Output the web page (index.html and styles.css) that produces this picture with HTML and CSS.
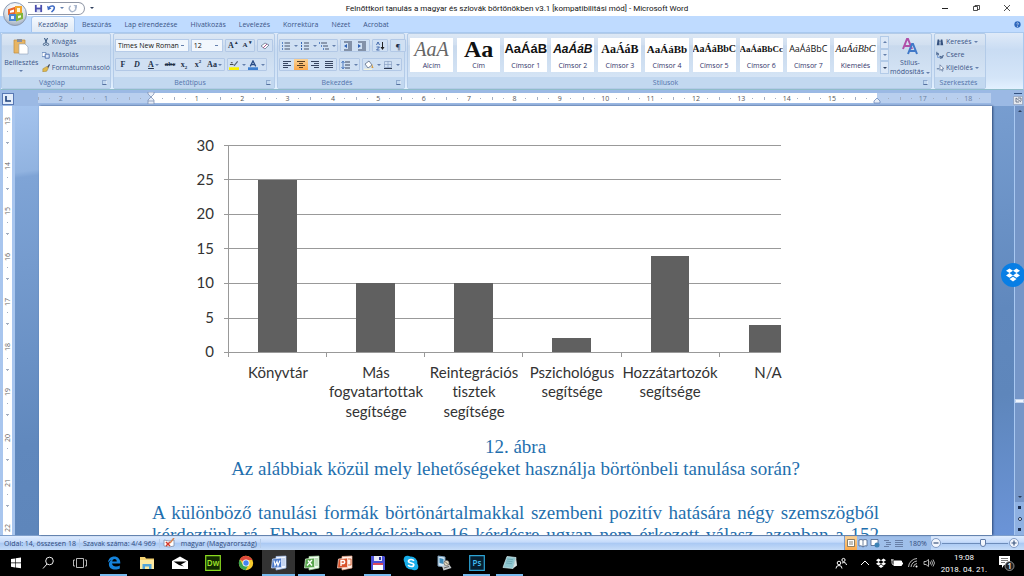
FILE: index.html
```html
<!DOCTYPE html>
<html lang="hu">
<head>
  <meta charset="UTF-8" />
  <title>Felnőttkori tanulás - Microsoft Word</title>
  <link rel="stylesheet" href="styles.css">
</head>
<body>
  <!-- Title bar -->
  <header class="titlebar">
    <button class="office-btn" aria-label="Office gomb">
      <svg viewBox="0 0 24 24">
        <defs><radialGradient id="orb" cx=".5" cy=".25" r=".8"><stop offset="0" stop-color="#fff"/><stop offset=".55" stop-color="#dde3ea"/><stop offset="1" stop-color="#98a5b8"/></radialGradient></defs>
        <circle cx="12" cy="12" r="11.5" fill="url(#orb)" stroke="#8c9cb5"/>
        <path d="M6 8l6-2v5l-6 1z" fill="#fff" stroke="#e8642c" stroke-width="2"/>
        <path d="M13 5h5v6h-5z" fill="#fff3d0" stroke="#f2a52d" stroke-width="2"/>
        <path d="M7 13h5v5H7z" fill="#e7f0ff" stroke="#4a86cf" stroke-width="2"/>
        <path d="M14 13l5-1v4l-5 2z" fill="#f3ffe0" stroke="#7eb43c" stroke-width="2"/>
      </svg>
    </button>
    <div class="qat">
      <button aria-label="Mentés"><svg viewBox="0 0 10 10"><path d="M1 1h8v8H1z" fill="#4b4fae"/><path d="M3 1h4v3H3z" fill="#fff"/><path d="M3 6h4v3H3z" fill="#d5dcf4"/></svg></button>
      <button aria-label="Visszavonás"><svg viewBox="0 0 10 10"><path d="M2 4c3-3 7-2 6 1-.4 2-2 3-3 4" fill="none" stroke="#3f6bc4" stroke-width="1.7"/><path d="M0 2l1 5 4-2z" fill="#3f6bc4"/></svg></button>
      <i class="arrow"></i>
      <button aria-label="Ismét"><svg viewBox="0 0 10 10"><path d="M3 2a3.5 3.5 0 1 0 5 1" fill="none" stroke="#aab7cd" stroke-width="1.6"/><path d="M6 1h4v4z" fill="#aab7cd"/></svg></button>
    </div>
    <i class="arrow dark"></i>
    <h1>Felnőttkori tanulás a magyar és szlovák börtönökben v3.1 [kompatibilitási mód] - Microsoft Word</h1>
    <div class="window-btns">
      <button aria-label="Kis méret"><svg viewBox="0 0 10 10"><path d="M2 5.500h6" stroke="#222"/></svg></button>
      <button aria-label="Előző méret"><svg viewBox="0 0 10 10"><path d="M2.500 3.500h4v4h-4zM4 3.500v-1h4.500v4h-2" fill="none" stroke="#222" stroke-width=".8"/></svg></button>
      <button aria-label="Bezárás"><svg viewBox="0 0 10 10"><path d="M2 2l6 6M8 2l-6 6" stroke="#222" stroke-width=".8"/></svg></button>
    </div>
  </header>

  <!-- Ribbon tabs -->
  <nav class="tabs">
    <button class="active">Kezdőlap</button>
    <button>Beszúrás</button>
    <button>Lap elrendezése</button>
    <button>Hivatkozás</button>
    <button>Levelezés</button>
    <button>Korrektúra</button>
    <button>Nézet</button>
    <button>Acrobat</button>
    <button class="help" aria-label="Súgó"><svg viewBox="0 0 10 10"><circle cx="5" cy="5" r="3.500" fill="#2f68bd"/><path d="M4 4q1-1.500 2 0 0 1-1 1.500M5 6.500v1" fill="none" stroke="#fff" stroke-width=".8"/></svg></button>
  </nav>

  <!-- Ribbon -->
  <section class="ribbon">
    <div class="group clipboard">
      <div class="group-body">
        <button class="big"><svg viewBox="0 0 16 17"><path d="M1 2h11v13H1z" fill="#e8b563" stroke="#c18c3c" stroke-width=".7"/><path d="M4 1h5v3H4z" fill="#8a8f9c"/><path d="M6 6h6l3 3v7H6z" fill="#fff" stroke="#8d9db7" stroke-width=".6"/></svg>Beillesztés<i class="arrow"></i></button>
        <div class="stack">
          <button><svg viewBox="0 0 10 10"><path d="M3 0l3 6M7 0L4 6" stroke="#38577f" stroke-width="1.300"/><circle cx="3" cy="8" r="1.400" fill="none" stroke="#38577f"/><circle cx="7" cy="8" r="1.400" fill="none" stroke="#38577f"/></svg>Kivágás</button>
          <button><svg viewBox="0 0 10 10"><path d="M0 2h5v5H0z" fill="#fff" stroke="#5c7fb5"/><path d="M4 4h5v5H4z" fill="#dbe7fa" stroke="#3d62a5"/></svg>Másolás</button>
          <button><svg viewBox="0 0 10 10"><path d="M6 4l3-4 1 1-2 4z" fill="#4b4f58"/><path d="M1 6l5-3 2 2-2 4-5 1z" fill="#e0b84c" stroke="#8b7436" stroke-width=".5"/></svg>Formátummásoló</button>
        </div>
      </div>
      <footer>Vágólap<i class="launcher"></i></footer>
    </div>

    <div class="group font">
      <div class="group-body rows">
        <div class="row">
          <select class="font-name" aria-label="Betűtípus"><option>Times New Roman</option></select>
          <select class="font-size" aria-label="Betűméret"><option>12</option></select>
          <span class="strip"><button class="serif">A<sup>▴</sup></button><button class="serif small">A<sup>▾</sup></button></span>
          <span class="strip"><button aria-label="Formázás törlése"><svg viewBox="0 0 10 10"><path d="M1 5l4-3 4 2-4 4z" fill="#fff" stroke="#677791" stroke-width=".8"/><path d="M3 7l4-4" stroke="#a75b8d"/></svg></button></span>
        </div>
        <div class="row">
          <span class="strip">
            <button class="serif">F</button>
            <button class="serif italic">D</button>
            <button class="serif wide"><u>A</u><i class="arrow"></i></button>
            <button class="serif"><s>abc</s></button>
            <button class="serif script">x<sub>2</sub></button>
            <button class="serif script">x<sup>2</sup></button>
            <button class="serif wide">Aa<i class="arrow"></i></button>
          </span>
          <span class="strip">
            <button class="wide" aria-label="Kiemelés színe"><svg viewBox="0 0 11 11"><path d="M1 5h4M2 3h2" stroke="#333"/><path d="M5 6l4-5 1 1-4 5z" fill="#566377"/><path d="M0 8h11v3H0z" fill="#fbf100"/></svg><i class="arrow"></i></button>
            <button class="wide" aria-label="Betűszín"><svg viewBox="0 0 11 11"><path d="M2.500 7l3-6 3 6M4 5h3" fill="none" stroke="#284b85" stroke-width="1.400"/><path d="M0 8h11v3H0z" fill="#3d7fd0"/></svg><i class="arrow"></i></button>
          </span>
        </div>
      </div>
      <footer>Betűtípus<i class="launcher"></i></footer>
    </div>

    <div class="group paragraph">
      <div class="group-body rows">
        <div class="row">
          <span class="strip">
            <button class="wide" aria-label="Felsorolás"><svg viewBox="0 0 10 10"><path d="M3.500 2H9M3.500 5H9M3.500 8H9" stroke="#47536b"/><path d="M1 2h1M1 5h1M1 8h1" stroke="#3565b5" stroke-width="1.500"/></svg><i class="arrow"></i></button>
            <button class="wide" aria-label="Számozás"><svg viewBox="0 0 10 10"><path d="M4 2h5M4 5h5M4 8h5" stroke="#47536b"/><path d="M1.500 1v8" stroke="#3565b5" stroke-dasharray="2 1"/></svg><i class="arrow"></i></button>
            <button class="wide" aria-label="Többszintű lista"><svg viewBox="0 0 10 10"><path d="M2 2h6M4 5h5M6 8h4" stroke="#47536b"/><path d="M0 2h1M2 5h1M4 8h1" stroke="#3565b5" stroke-width="1.500"/></svg><i class="arrow"></i></button>
          </span>
          <span class="strip">
            <button aria-label="Behúzás csökkentése"><svg viewBox="0 0 10 10"><path d="M1 1h8M5 3h4M5 5h4M5 7h4M1 9h8" stroke="#38455f"/><path d="M4 3v4L1 5z" fill="#2f62b5"/></svg></button>
            <button aria-label="Behúzás növelése"><svg viewBox="0 0 10 10"><path d="M1 1h8M5 3h4M5 5h4M5 7h4M1 9h8" stroke="#38455f"/><path d="M1 3v4l3-2z" fill="#2f62b5"/></svg></button>
          </span>
          <span class="strip"><button aria-label="Rendezés"><svg viewBox="0 0 10 10"><path d="M1.500 4L3 1l1.500 3M1.500 6h3l-3 3h3" fill="none" stroke="#3159a0" stroke-width=".9"/><path d="M7.500 1v6" stroke="#222"/><path d="M5.500 6h4l-2 3z" fill="#222"/></svg></button></span>
          <span class="strip"><button class="pilcrow">¶</button></span>
        </div>
        <div class="row">
          <span class="strip">
            <button aria-label="Balra"><svg viewBox="0 0 10 10"><path d="M1 1.500h8M1 3.500h5M1 5.500h8M1 7.500h5" stroke="#38455f"/></svg></button>
            <button class="pressed" aria-label="Középre"><svg viewBox="0 0 10 10"><path d="M1 1.500h8M3 3.500h4M1 5.500h8M3 7.500h4" stroke="#593f22"/></svg></button>
            <button aria-label="Jobbra"><svg viewBox="0 0 10 10"><path d="M1 1.500h8M4 3.500h5M1 5.500h8M4 7.500h5" stroke="#38455f"/></svg></button>
            <button aria-label="Sorkizárt"><svg viewBox="0 0 10 10"><path d="M1 1.500h8M1 3.500h8M1 5.500h8M1 7.500h8" stroke="#38455f"/></svg></button>
          </span>
          <span class="strip"><button class="wide" aria-label="Sorköz"><svg viewBox="0 0 10 10"><path d="M4 2h5M4 5h5M4 8h5" stroke="#38455f"/><path d="M2 2v6M.5 3L2 1l1.500 2M.5 7L2 9l1.500-2" fill="none" stroke="#2f62b5" stroke-width=".8"/></svg><i class="arrow"></i></button></span>
          <span class="strip">
            <button class="wide" aria-label="Árnyékolás"><svg viewBox="0 0 10 10"><path d="M1 4l4-3 3 4-4 3z" fill="#fff" stroke="#5b6c86" stroke-width=".8"/><path d="M8 4l1.500 4h-2z" fill="#d69a3a"/><path d="M0 8.500h8v1.500H0z" fill="#f2f2dc"/></svg><i class="arrow"></i></button>
            <button class="wide" aria-label="Szegélyek"><svg viewBox="0 0 10 10"><path d="M1.500 1.500h7v6h-7zM5 1v7M1 4.500h8" fill="none" stroke="#8aa0c4" stroke-width=".7"/><path d="M1 8.500h8" stroke="#2f3a50"/></svg><i class="arrow"></i></button>
          </span>
        </div>
      </div>
      <footer>Bekezdés<i class="launcher"></i></footer>
    </div>

    <div class="group styles">
      <div class="group-body">
        <div class="gallery">
          <button><span class="sample subtitle">AaA</span>Alcím</button>
          <button><span class="sample title">Aa</span>Cím</button>
          <button><span class="sample h1">AaÁáB</span>Címsor 1</button>
          <button><span class="sample h2">AaÁáB</span>Címsor 2</button>
          <button><span class="sample h3">AaÁáB</span>Címsor 3</button>
          <button><span class="sample h4">AaÁáBb</span>Címsor 4</button>
          <button><span class="sample h5">AaÁáBbC</span>Címsor 5</button>
          <button><span class="sample h6">AaÁáBbCc</span>Címsor 6</button>
          <button><span class="sample h7">AaÁáBbC</span>Címsor 7</button>
          <button><span class="sample emph">AaÁáBbC</span>Kiemelés</button>
        </div>
        <div class="gallery-scroll">
          <button aria-label="Fel"><i class="arrow up"></i></button>
          <button aria-label="Le"><i class="arrow"></i></button>
          <button aria-label="Több"><i class="arrow dark"></i></button>
        </div>
        <button class="big change-styles"><svg viewBox="0 0 16 17"><path d="M1 11L5 1h1l4 10M3 8h5" fill="none" stroke="#b04fa8" stroke-width="2"/><path d="M6 16l4-10h1l4 10M8 13h5" fill="none" stroke="#3f78c8" stroke-width="2"/></svg><span>Stílus-<br>módosítás <i class="arrow"></i></span></button>
      </div>
      <footer>Stílusok<i class="launcher"></i></footer>
    </div>

    <div class="group editing">
      <div class="group-body">
        <div class="stack">
          <button><svg viewBox="0 0 10 10"><path d="M1 9l1-7h2l.5 7zM9 9L8 2H6l-.5 7z" fill="#34517f"/><path d="M4 4h2" stroke="#34517f"/></svg>Keresés <i class="arrow"></i></button>
          <button><svg viewBox="0 0 10 10"><path d="M1 1v4h2V3H1M5 6v3h2V7H5M8 9V6h2" fill="none" stroke="#34517f"/><path d="M2 6v2h2" fill="none" stroke="#3f78c8" stroke-width=".8"/></svg>Csere</button>
          <button><svg viewBox="0 0 10 10"><path d="M5 1v7l1.500-1.500 1.200 2.500 1-.5-1-2.500H10z" fill="#fff" stroke="#34517f" stroke-width=".7"/><path d="M1 6h3" stroke="#34517f"/></svg>Kijelölés <i class="arrow"></i></button>
        </div>
      </div>
      <footer>Szerkesztés</footer>
    </div>
  </section>

  <!-- Horizontal ruler -->
  <div class="ruler-row">
    <button class="tab-stop" aria-label="Tabulátor"><svg viewBox="0 0 10 10"><path d="M3 2v5h5" fill="none" stroke="#1d3f7a" stroke-width="1.600"/></svg></button>
    <div class="ruler">
      <span>2</span><span>1</span>
      <span class="edge-left"><svg viewBox="0 0 8 12"><path d="M1 0h6v2L4 5 1 2zM4 5l3 3v4H1V8zM1 9h6" fill="#e8eef8" stroke="#7388ad" stroke-width=".7"/></svg></span>
      <span class="on">1</span><span class="on">2</span><span class="on">3</span><span class="on">4</span><span class="on">5</span>
      <span class="on">6</span><span class="on">7</span><span class="on">8</span><span class="on">9</span><span class="on">10</span>
      <span class="on">11</span><span class="on">12</span><span class="on">13</span><span class="on">14</span><span class="on">15</span>
      <span class="edge-right"><svg viewBox="0 0 8 12"><path d="M4 6l3 3v2H1V9z" fill="#e8eef8" stroke="#5f7fb5" stroke-width=".7"/></svg></span>
      <span>17</span><span>18</span>
    </div>
    <button class="ruler-toggle" aria-label="Vonalzó"><svg viewBox="0 0 10 12"><path d="M1 .5h8" stroke="#34517f"/><path d="M.5 3.500h9v8h-9z" fill="#e6e9ee" stroke="#8b99b2" stroke-width=".6"/><path d="M3 5l5 4M3 5v4h3M5 5h3v3" fill="none" stroke="#59637a" stroke-width=".8"/></svg></button>
  </div>

  <!-- Document -->
  <main class="workspace">
    <div class="vruler">
      <div class="vruler-scale">
        <span>13</span><span>14</span><span>15</span><span>16</span><span>17</span>
        <span>18</span><span>19</span><span>20</span><span>21</span><span>22</span>
      </div>
    </div>
    <article class="page">
      <svg class="chart" viewBox="193 137 646 288" role="img" aria-label="12. ábra">
        <g class="grid">
          <path d="M224 145.500H781M224 179.500H781M224 214.500H781M224 248.500H781M224 283.500H781M224 318.500H781"/>
          <path d="M224 352.500H781M228.500 145V357M326.500 352V357M424.500 352V357M522.500 352V357M621.500 352V357M719.500 352V357"/>
        </g>
        <g class="bars">
          <rect x="258" y="180" width="39" height="172"/>
          <rect x="356" y="283" width="39" height="69"/>
          <rect x="454" y="283" width="39" height="69"/>
          <rect x="552" y="338" width="39" height="14"/>
          <rect x="651" y="256" width="38" height="96"/>
          <rect x="749" y="325" width="32" height="27"/>
        </g>
        <g class="axis-y">
          <text x="214" y="151">30</text>
          <text x="214" y="185">25</text>
          <text x="214" y="219">20</text>
          <text x="214" y="254">15</text>
          <text x="214" y="288">10</text>
          <text x="214" y="323">5</text>
          <text x="214" y="357">0</text>
        </g>
        <g class="axis-x">
          <text x="278" y="378">Könyvtár</text>
          <text x="376" y="378">Más</text>
          <text x="376" y="397">fogvatartottak</text>
          <text x="376" y="417">segítsége</text>
          <text x="474" y="378">Reintegrációs</text>
          <text x="474" y="397">tisztek</text>
          <text x="474" y="417">segítsége</text>
          <text x="572" y="378">Pszichológus</text>
          <text x="572" y="397">segítsége</text>
          <text x="670" y="378">Hozzátartozók</text>
          <text x="670" y="397">segítsége</text>
          <text x="768" y="378">N/A</text>
        </g>
      </svg>
      <p class="caption">12. ábra</p>
      <p class="caption question">Az alábbiak közül mely lehetőségeket használja börtönbeli tanulása során?</p>
      <p class="line">A különböző tanulási formák börtönártalmakkal szembeni pozitív hatására négy szemszögből</p>
      <p class="line">kérdeztünk rá. Ebben a kérdéskörben 16 kérdésre ugyan nem érkezett válasz, azonban a 152</p>
    </article>
    <div class="scrollbar">
      <div class="track">
        <i class="arrow up dark"></i>
        <div class="thumb"></div>
        <i class="arrow dark"></i>
      </div>
      <button aria-label="Előző oldal"><i class="dot"></i></button>
      <button aria-label="Tallózás"><i class="dot ring"></i></button>
      <button aria-label="Következő oldal"><i class="dot"></i></button>
    </div>
    <button class="dropbox" aria-label="Dropbox"><svg viewBox="0 0 24 24"><circle cx="12" cy="12" r="12" fill="#087ee5"/><path d="M8.500 5.500l3.500 2.300-3.500 2.300L5 7.800zM15.500 5.500L19 7.800l-3.500 2.300L12 7.800zM8.500 10.100l3.500 2.300-3.500 2.300L5 12.400zM15.500 10.100l3.500 2.300-3.500 2.300-3.500-2.300zM12 13.800l3.500 2.300-3.500 2.300-3.500-2.300z" fill="#fff"/></svg></button>
  </main>

  <!-- Status bar -->
  <footer class="statusbar">
    <span>Oldal: 14, összesen 18</span>
    <span>Szavak száma: 4/4 969</span>
    <span class="proof"><svg viewBox="0 0 12 10"><path d="M1 2l5 1 5-1v6l-5 1-5-1z" fill="#fff" stroke="#7b8da9" stroke-width=".8"/><path d="M3 4l4 4M7 4L3 8" stroke="#d33a2c" stroke-width="1.500"/><path d="M7 5l4-5" stroke="#d98555" stroke-width="1.500"/></svg></span>
    <span>magyar (Magyarország)</span>
    <div class="views">
      <button class="pressed" aria-label="Nyomtatási elrendezés"><svg viewBox="0 0 10 10"><path d="M1.500 1.500h7v7h-7zM3 4h4M3 6h4" fill="#fff" stroke="#6d6650" stroke-width=".8"/></svg></button>
      <button aria-label="Olvasás"><svg viewBox="0 0 10 10"><path d="M5 2Q3 1 1 2v6q2-1 4 1 2-2 4-1V2Q7 1 5 2v7" fill="#fff" stroke="#4a5f86" stroke-width=".8"/></svg></button>
      <button aria-label="Webes elrendezés"><svg viewBox="0 0 10 10"><path d="M1 1.500h7v6H1z" fill="#fff" stroke="#4a5f86" stroke-width=".8"/><circle cx="7" cy="7" r="2.500" fill="#3d82b5"/></svg></button>
      <button aria-label="Vázlat"><svg viewBox="0 0 10 10"><path d="M2 2.500h5M4 4.500h5M4 6.500h5M2 8.500h5" stroke="#5a6f95" stroke-width=".8"/></svg></button>
      <button aria-label="Piszkozat"><svg viewBox="0 0 10 10"><path d="M1 2.500h8M1 4.500h8M1 6.500h8M1 8.500h8" stroke="#5a6f95" stroke-width=".8"/></svg></button>
    </div>
    <button class="zoom-value">180%</button>
    <button class="round" aria-label="Kicsinyítés"><svg viewBox="0 0 10 10"><circle cx="5" cy="5" r="4.500" fill="#f2f6fd" stroke="#6c89b8" stroke-width=".8"/><path d="M2.500 5h5" stroke="#3a557f" stroke-width="1.200"/></svg></button>
    <input class="zoom" type="range" min="10" max="220" value="142" aria-label="Nagyítás">
    <button class="round" aria-label="Nagyítás"><svg viewBox="0 0 10 10"><circle cx="5" cy="5" r="4.500" fill="#f2f6fd" stroke="#6c89b8" stroke-width=".8"/><path d="M2.500 5h5M5 2.500v5" stroke="#3a557f" stroke-width="1.200"/></svg></button>
  </footer>

  <!-- Windows taskbar -->
  <nav class="taskbar">
    <div class="system">
      <button aria-label="Start"><svg viewBox="0 0 16 16"><path d="M3 4l4-.6v4.200H3zM7.600 3.300L13 2.500v5.100H7.600zM3 8.200h4v4.200l-4-.6zM7.600 8.200H13v5.100l-5.400-.8z" fill="#fff"/></svg></button>
      <button aria-label="Keresés"><svg viewBox="0 0 16 16"><circle cx="9.500" cy="6" r="3.800" fill="none" stroke="#eee"/><path d="M7 9l-4 4.500" stroke="#eee"/></svg></button>
      <button aria-label="Feladatnézet"><svg viewBox="0 0 16 16"><path d="M4.500 3.500h7v9h-7zM3 5H1.500v6H3M13 5h1.500v6H13" fill="none" stroke="#ccc" stroke-width=".9"/></svg></button>
    </div>
    <div class="apps">
      <button class="open" aria-label="Edge"><svg viewBox="0 0 16 16"><path d="M2 7.500C2.500 3.500 5 1.500 8.200 1.500c3.800 0 6.300 2.700 6.100 7H6c.2 2 2 3 4 3 1.500 0 2.800-.4 3.800-1v3c-1.200.8-2.800 1.100-4.500 1.100-3.800 0-6.400-2-6.400-5.300 0-2 1-3.500 2.800-4.300-1.700.3-2.900 1.300-3.700 2.500zM6.200 6.500h4.600c0-1.500-.8-2.400-2.200-2.400-1.300 0-2.200.9-2.400 2.400z" fill="#1583dc"/></svg></button>
      <button aria-label="Fájlkezelő"><svg viewBox="0 0 16 16"><path d="M1 2h5l1 1.500h8V14H1z" fill="#f4d271"/><path d="M1 5h14v9H1z" fill="#fde9a0"/><path d="M3.500 14V9h9v5h-2.500v-2.500H6V14z" fill="#55a5d9"/></svg></button>
      <button aria-label="Posta"><svg viewBox="0 0 16 16"><path d="M0 6l8-4.500L16 6v8H0z" fill="#fff"/><path d="M1.500 6.500h13L9 9.500l3 2-5-1.500z" fill="#000"/></svg></button>
      <button aria-label="Dreamweaver"><svg viewBox="0 0 16 16"><path d="M.7.700h14.600v14.600H.7z" fill="#122b00" stroke="#8adb20" stroke-width="1.200"/><text class="dw" x="8" y="11">Dw</text></svg></button>
      <button aria-label="Chrome"><svg viewBox="0 0 16 16"><circle cx="8" cy="8" r="7.200" fill="#f7ca2d"/><path d="M8 8L1.800 4.400A7.200 7.200 0 0 1 14.500 5H8z" fill="#de4a3c"/><path d="M1.800 4.400A7.200 7.200 0 0 0 7.500 15.200L10.500 10 8 8 5 10z" fill="#3ca552"/><circle cx="8" cy="8" r="3.500" fill="#fff"/><circle cx="8" cy="8" r="2.700" fill="#4284f0"/></svg></button>
      <button class="open current" aria-label="Word"><svg viewBox="0 0 16 16"><path d="M5 1.500L15 1v12l-10 2z" fill="#f3f7ff" stroke="#9db9e8" stroke-width=".7"/><path d="M11 4h3M11 6h3M11 8h3M11 10h3" stroke="#7193cf" stroke-width=".7"/><path d="M1.500 4l9-1v9.500l-10 .5z" fill="#4a78c8" stroke="#dbe7ff" stroke-width=".7"/><path d="M3 5.500l1 5 2-4 1 4 2-5" fill="none" stroke="#fff" stroke-width="1.200"/></svg></button>
      <button class="open" aria-label="Excel"><svg viewBox="0 0 16 16"><path d="M5 1.500L15 1v12l-10 2z" fill="#f3fff2" stroke="#9ed09a" stroke-width=".7"/><path d="M11 4h3M11 6h3M11 8h3M11 10h3" stroke="#5aa657" stroke-width=".7"/><path d="M1.500 4l9-1v9.500l-10 .5z" fill="#58a64d" stroke="#e2f8de" stroke-width=".7"/><path d="M4 5.500l4 5M8 5l-5 5.500" stroke="#fff" stroke-width="1.300"/></svg></button>
      <button aria-label="PowerPoint"><svg viewBox="0 0 16 16"><path d="M5 1.500L15 1v12l-10 2z" fill="#fff3ed" stroke="#e9a88b" stroke-width=".7"/><path d="M11 4h3v6h-3" fill="none" stroke="#db6a3f"/><path d="M1.500 4l9-1v9.500l-10 .5z" fill="#d9532c" stroke="#ffe4d8" stroke-width=".7"/><path d="M4 11V5.500h3q1.500 1.500 0 3H4" fill="none" stroke="#fff" stroke-width="1.300"/></svg></button>
      <button class="open" aria-label="Total Commander"><svg viewBox="0 0 16 16"><path d="M1 1h13l1 1v13H1z" fill="#4a50d8"/><path d="M4 1h8v5H4z" fill="#e8e8f2"/><path d="M9 2h2v3H9z" fill="#3038a0"/><path d="M3 8h10v7H3z" fill="#fff"/><path d="M3 8h10v2H3z" fill="#d84a5b"/></svg></button>
      <button aria-label="Skype"><svg viewBox="0 0 16 16"><circle cx="8" cy="8" r="6.400" fill="#18aeea"/><circle cx="4.500" cy="4.500" r="3.800" fill="#18aeea"/><circle cx="11.500" cy="11.500" r="3.800" fill="#18aeea"/><path d="M10.800 5.800C10 4 5.500 4 5.500 6.300c0 2.200 5.300 1.100 5.300 3.500 0 2.300-4.800 2.200-5.600.2" fill="none" stroke="#fff" stroke-width="1.700"/></svg></button>
      <button aria-label="Eszközök"><svg viewBox="0 0 16 16"><path d="M2 1l7 1v10l-7-1z" fill="#d4e8f5" stroke="#7999b5"/><path d="M3.500 3l4 1v5l-4-1z" fill="#3789bb"/><path d="M6 11l7-2 2.500 4-8 2.500z" fill="#c5c9cb"/><circle cx="10.500" cy="8" r="2.600" fill="#e5dac0" stroke="#666" stroke-width=".7"/><path d="M9 6.500l3 3M8 13l5-1.500" stroke="#444" stroke-width=".8"/></svg></button>
      <button class="open" aria-label="Photoshop"><svg viewBox="0 0 16 16"><path d="M.7.700h14.600v14.600H.7z" fill="#061e30" stroke="#2da4d4" stroke-width="1.200"/><text class="ps" x="8" y="11">Ps</text></svg></button>
      <button class="open" aria-label="Jegyzettömb"><svg viewBox="0 0 16 16"><path d="M5 1.500l9 1-3 11-10-1z" fill="#8fc6cf" stroke="#d9eef0" stroke-width=".7"/><path d="M11 13.500l3-11 1 8z" fill="#d8e4e5"/><path d="M5 4l6 .7M4.500 6l6 .7M4 8l6 .7" stroke="#5d98a6" stroke-width=".6"/></svg></button>
    </div>
    <div class="tray">
      <button class="people" aria-label="Kapcsolatok"><svg viewBox="0 0 12 12"><circle cx="4" cy="6" r="1.800" fill="none" stroke="#fff"/><path d="M1 11.500q0-3 3-3t3 3" fill="none" stroke="#fff"/><circle cx="8.500" cy="3" r="1.600" fill="none" stroke="#fff"/><path d="M7 6q4-1.500 4.500 2" fill="none" stroke="#fff"/></svg></button>
      <button aria-label="Rejtett ikonok"><svg viewBox="0 0 12 12"><path d="M2 8l4-4 4 4" fill="none" stroke="#fff"/></svg></button>
      <button aria-label="Dropbox állapot"><svg viewBox="0 0 24 24"><path d="M7 3l5 3.500L7 10 2 6.500zM17 3l5 3.500-5 3.500-5-3.500zM7 10l5 3.500L7 17l-5-3.500zM17 10l5 3.500-5 3.500-5-3.500zM12 15l5 3.500-5 3.500-5-3.500z" fill="#fff"/></svg></button>
      <button aria-label="Akkumulátor"><svg viewBox="0 0 12 12"><path d="M3 4h7.500v4.500H3z" fill="#fff" stroke="#fff"/><path d="M11 5.500h1v2h-1z" fill="#fff"/><path d="M0 3h3M1 2v4q0 2 2 2" fill="none" stroke="#ccc"/></svg></button>
      <button aria-label="Hálózat"><svg viewBox="0 0 12 12"><path d="M1.500 10A9 9 0 0 1 10 1.500M4 10a6.500 6.500 0 0 1 6-6M6.500 10A4 4 0 0 1 10 6.500" fill="none" stroke="#ccc" stroke-width=".9"/><circle cx="9.500" cy="9.500" r="1" fill="#fff"/></svg></button>
      <button aria-label="Hangerő"><svg viewBox="0 0 12 12"><path d="M1 4.500h2l2.500-2v7L3 7.500H1zM7 4.500q1 1.500 0 3M8.500 3.500q2 2.500 0 5M10 2.500q3 3.500 0 7" fill="none" stroke="#ddd" stroke-width=".8"/></svg></button>
      <div class="clock"><time>19:08</time><time>2018. 04. 21.</time></div>
      <button class="notes" aria-label="Értesítések"><svg viewBox="0 0 18 18"><path d="M2 2h11v9H7l-2 3v-3H2z" fill="#fff"/><path d="M4 4.500h7M4 6.500h7M4 8.500h4" stroke="#555" stroke-width=".8"/><circle cx="12.500" cy="12" r="4.500" fill="#222" stroke="#aaa" stroke-width=".8"/><text class="count" x="12.500" y="15">1</text></svg></button>
    </div>
  </nav>
</body>
</html>
```

FILE: styles.css
```css
* {
  box-sizing: border-box;
}

body {
  margin: 0;
  height: 100vh;
  display: flex;
  flex-direction: column;
  overflow: hidden;
  font-family: "Open Sans", "Noto Sans", sans-serif;
  font-size: 7px;
  line-height: 9px;
  color: #3b5587;
  background: #a9c4ea;
}

button {
  display: flex;
  align-items: center;
  justify-content: center;
  padding: 0;
  border: none;
  background: none;
  font: inherit;
  color: inherit;
  white-space: nowrap;
}

svg {
  display: block;
  flex: none;
}

.arrow {
  display: inline-block;
  flex: none;
  width: 0;
  border: 2px solid transparent;
  border-top-color: #6580ad;
  border-bottom: 0;
}

.arrow.up {
  border-top: 0;
  border-bottom: 2px solid #6580ad;
}

.arrow.dark {
  border-top-color: #2f3f5c;
}

.arrow.up.dark {
  border-bottom-color: #2f3f5c;
}

/* Title bar */
.titlebar {
  position: relative;
  flex: none;
  display: flex;
  align-items: center;
  height: 16px;
  padding-left: 28px;
  background: #fff;
}

.office-btn {
  position: absolute;
  left: 3px;
  top: 2px;
  z-index: 2;
}

.office-btn svg {
  width: 24px;
  height: 24px;
}

.qat {
  display: flex;
  align-items: center;
  gap: 4px;
  height: 13px;
  padding: 0 7px 0 6px;
  margin-right: 5px;
  border: 1px solid #8f96a5;
  border-left: none;
  border-radius: 0 7px 7px 0;
}

.qat svg {
  width: 9px;
  height: 9px;
}

.titlebar h1 {
  flex: 1;
  margin: 0;
  text-align: center;
  font-family: Roboto, "Open Sans", sans-serif;
  font-size: 8px;
  font-weight: 400;
  color: #111;
}

.window-btns {
  display: flex;
  gap: 21px;
  padding-right: 12px;
}

.window-btns svg {
  width: 10px;
  height: 10px;
}

/* Tabs */
.tabs {
  flex: none;
  display: flex;
  gap: 1px;
  height: 16px;
  padding-left: 31px;
  background: #bfdbff;
}

.tabs button {
  padding: 0 6px;
}

.tabs .active {
  border: 1px solid #a5c5ee;
  border-bottom: none;
  border-radius: 3px 3px 0 0;
  background: linear-gradient(#f4f9ff, #dfe9f5);
}

.tabs .help {
  margin-left: auto;
  padding: 0 2px 0 0;
}

.help svg {
  width: 9px;
  height: 9px;
}

/* Ribbon */
.ribbon {
  flex: none;
  display: flex;
  gap: 2px;
  height: 58px;
  padding: 0 37px 0 0;
  border: 1px solid #a9c9ef;
  border-bottom-color: #8fbcc9;
  background: linear-gradient(#dfeaf8, #c9dcf3 30%, #d4e5f8 80%, #e3f1ff);
}

.group {
  flex: none;
  display: flex;
  flex-direction: column;
  border: 1px solid #b3cbe8;
  border-radius: 2px;
  background: linear-gradient(#dde8f5, #d1dff0 20%, #c8d9ed 22%, #d9e8f8);
}

.group-body {
  flex: 1;
  display: flex;
}

.group > footer {
  display: flex;
  align-items: center;
  height: 11px;
  padding-right: 3px;
  color: #5273ab;
  background: #c2d8f0;
}

.group > footer::before,
.group > footer::after {
  content: "";
  flex: 1;
}

.group > footer::after {
  order: 1;
}

.launcher {
  order: 2;
  width: 5px;
  height: 5px;
  border: 1px solid #8ea9cf;
  border-right-color: #d9e6f5;
  border-bottom-color: #55719f;
}

.clipboard { width: 110px; }
.font { width: 162px; }
.paragraph { width: 128px; }
.styles { flex: 1; }
.editing { width: 52px; }

.big {
  flex-direction: column;
  justify-content: flex-start;
  gap: 3px;
  width: 39px;
  padding-top: 4px;
}

.big svg {
  width: 16px;
  height: 17px;
}

.stack {
  display: flex;
  flex-direction: column;
  align-items: flex-start;
  gap: 4px;
  padding: 3px 0 0 1px;
}

.stack button {
  gap: 2px;
}

.stack svg {
  width: 8px;
  height: 8px;
}

.rows {
  flex-direction: column;
  gap: 6px;
  padding: 5px 1px 0;
}

.row {
  display: flex;
  gap: 2px;
  height: 13px;
}

.strip {
  display: flex;
  border: 1px solid #b2c8e6;
  border-radius: 1px;
  background: #d0e0f3;
}

.strip button {
  width: 14px;
  gap: 3px;
  font-size: 7px;
  color: #223048;
}

.strip .wide {
  width: 19px;
}

.strip svg {
  width: 10px;
  height: 10px;
}

.strip .serif {
  gap: 1px;
  font-family: "Liberation Serif", serif;
  font-size: 8px;
  font-weight: 700;
}

.strip .small {
  font-size: 7px;
}

.strip s {
  font-size: 7px;
}

.strip .italic {
  font-style: italic;
}

.strip sup,
.strip sub {
  font-size: 5px;
  line-height: 5px;
}

.strip sup {
  align-self: flex-start;
}

.strip sub {
  align-self: flex-end;
}

.strip .script {
  gap: 0;
}

.strip .pilcrow {
  font-size: 8px;
}

.pressed {
  background: linear-gradient(#fbd397, #fba94c);
}

select {
  appearance: none;
  height: 13px;
  padding: 0 2px;
  border: 1px solid #b6cbe8;
  border-radius: 0;
  font: inherit;
  color: #111;
  background: linear-gradient(#6580ad, #6580ad) right 4px center / 3px 1px no-repeat, #f2f7fd;
}

.font-name { width: 76px; }
.font-size { width: 33px; }

/* Styles gallery */
.gallery {
  flex: 1;
  display: grid;
  grid-template-columns: repeat(10, 1fr);
  gap: 4px;
  padding: 4px 3px 5px 2px;
}

.gallery button {
  flex-direction: column;
  justify-content: space-between;
  min-width: 0;
  overflow: hidden;
  padding-bottom: 2px;
  color: #33356b;
  background: #fff;
}

.sample {
  height: 22px;
  line-height: 22px;
  font-family: "Liberation Serif", serif;
  font-size: 11px;
  font-weight: 700;
  color: #111;
}

.subtitle {
  font-size: 20px;
  font-style: italic;
  font-weight: 400;
  color: #666;
}

.title {
  font-size: 24px;
}

.h1,
.h2 {
  font-family: "Liberation Sans", sans-serif;
  font-size: 13px;
}

.h2 {
  font-size: 12px;
  font-style: italic;
}

.h3 {
  font-size: 12px;
}

.h5 {
  font-size: 10px;
}

.h6 {
  font-size: 9px;
}

.h7 {
  font-family: "Open Sans", sans-serif;
  font-size: 9px;
  font-weight: 400;
}

.emph {
  font-size: 10px;
  font-style: italic;
  font-weight: 400;
}

.gallery-scroll {
  display: flex;
  flex-direction: column;
  width: 9px;
  padding: 2px 0 3px;
}

.gallery-scroll button {
  flex: 1;
  border: 1px solid #b3cbe8;
  background: #dce8f7;
}

.change-styles {
  width: 42px;
}

/* Rulers */
.ruler-row {
  flex: none;
  display: flex;
  height: 16px;
  padding: 3px 1px 1px 2px;
  background: #9bb9e4;
}

.tab-stop {
  width: 12px;
  margin-right: 24px;
  border: 1px solid #5878b4;
  background: #e3edfb;
}

.tab-stop svg {
  width: 10px;
  height: 10px;
}

.ruler {
  flex: 1;
  display: flex;
  margin-bottom: 2px;
}

.ruler span {
  flex: 1 1 0;
  display: flex;
  align-items: center;
  justify-content: space-between;
  color: #6b7f9f;
  background: #b9cfee;
}

/* quarter and half centimetre ticks */
.ruler span::before,
.ruler span::after {
  content: "";
  width: 12px;
  height: 5px;
  background: linear-gradient(#a3aec0, #a3aec0) 0 1px / 1px 3px no-repeat,
    linear-gradient(#a3aec0, #a3aec0) 11px 2px / 1px 1px no-repeat;
}

.ruler span::after {
  background: linear-gradient(#a3aec0, #a3aec0) 0 2px / 1px 1px no-repeat;
}

.ruler .on {
  color: #555;
  background: #fff;
}

.ruler .edge-left {
  background: linear-gradient(90deg, #b9cfee 50%, #fff 50%);
}

.ruler .edge-right {
  background: linear-gradient(90deg, #fff 50%, #b9cfee 50%);
}

.ruler svg {
  width: 8px;
  height: 12px;
}

.ruler-toggle {
  margin-left: 22px;
  width: 10px;
}

.ruler-toggle svg {
  width: 10px;
  height: 12px;
}

.vruler {
  flex: none;
  width: 15px;
  padding-left: 3px;
  overflow: hidden;
  background: #a9c6ee;
}

.vruler-scale {
  display: flex;
  flex-direction: column;
  width: 9px;
  height: calc(100% + 24px);
  margin-top: -8px;
  background: #fff;
}

.vruler span {
  flex: 1;
  display: flex;
  align-items: center;
  justify-content: space-between;
  writing-mode: sideways-lr;
  color: #666;
}

.vruler span::before,
.vruler span::after {
  content: "";
  width: 5px;
  height: 12px;
  background: linear-gradient(#a3aec0, #a3aec0) 2px 0 / 1px 1px no-repeat;
}

.vruler span::before {
  background: linear-gradient(#a3aec0, #a3aec0) 1px 11px / 3px 1px no-repeat,
    linear-gradient(#a3aec0, #a3aec0) 2px 0 / 1px 1px no-repeat;
}

/* Document */
.workspace {
  position: relative;
  flex: 1;
  min-height: 0;
  display: flex;
  background: linear-gradient(172deg, #a5c4ee, #91b3e0 12%, #7fa4d6 13%, #6088bd 60%, #5e86bb 75%, #6b94d8);
}

.page {
  flex: 1;
  margin: 0 22px 0 24px;
  padding: 31px 113px 0;
  overflow: hidden;
  font-family: "Liberation Serif", serif;
  font-size: 19px;
  line-height: 22px;
  color: #1f6fae;
  background: #fff;
  box-shadow: 1px 0 2px #2d4876;
}

.chart {
  width: 646px;
  height: 288px;
  margin: 0 auto 11px;
  font-family: Lato, sans-serif;
  font-size: 15px;
  font-variant-ligatures: none;
}

.chart text {
  fill: #333;
}

.grid path {
  fill: none;
  stroke: #999;
}

.bars rect {
  fill: #606060;
}

.axis-y {
  text-anchor: end;
}

.axis-x {
  text-anchor: middle;
}

.page p {
  margin: 0;
  white-space: nowrap;
}

.caption {
  text-align: center;
}

.page .question {
  margin-bottom: 22px;
}

.line {
  text-align: justify;
  text-align-last: justify;
}

.scrollbar {
  flex: none;
  display: flex;
  flex-direction: column;
  width: 10px;
  border-left: 1px solid #a8c8f2;
  background: #8fb1e2;
}

.track {
  flex: 1;
  display: flex;
  flex-direction: column;
  align-items: center;
  padding: 4px 0;
  background: #7596c8;
}

.thumb {
  width: 9px;
  height: 4px;
  margin: auto 0 93px;
  border: 1px solid #c5d6ee;
  background: #f2f6fd;
}

.scrollbar button {
  height: 11px;
}

.dot {
  width: 3px;
  height: 3px;
  background: #1c2e4f;
}

.ring {
  width: 4px;
  height: 4px;
  border: 1px solid #1c2e4f;
  border-radius: 50%;
  background: #fff;
}

.dropbox {
  position: absolute;
  right: -1px;
  top: 157px;
}

.dropbox svg {
  width: 24px;
  height: 24px;
}

/* Status bar */
.statusbar {
  flex: none;
  display: flex;
  align-items: center;
  height: 15px;
  padding: 0 5px 0 4px;
  border-top: 1px solid #7f9fcb;
  color: #2f4a7c;
  background: linear-gradient(#e0edff, #c4dafa 45%, #a9c8f3 50%, #c6dcf8);
}

.statusbar > span {
  padding-right: 3px;
  margin-right: 3px;
  border-right: 1px solid #b4cbea;
}

.statusbar > .proof {
  border: none;
}

.proof svg {
  width: 12px;
  height: 10px;
}

.views {
  display: flex;
  align-self: stretch;
  margin-left: auto;
  border-left: 1px solid #7d9dcb;
  background: #9fbfea;
}

.views button {
  width: 12px;
}

.views svg,
.round svg {
  width: 10px;
  height: 10px;
}

.zoom-value {
  align-self: stretch;
  width: 26px;
  background: #9fbfea;
}

.zoom {
  appearance: none;
  width: 66px;
  height: 10px;
  margin: 0 1px;
  background: linear-gradient(#6d8cba, #6d8cba) center / 100% 1px no-repeat;
}

.zoom::-webkit-slider-thumb {
  appearance: none;
  width: 6px;
  height: 8px;
  border: 1px solid #5f7ba8;
  border-radius: 1px 1px 3px 3px;
  background: #f2f6fd;
}

/* Taskbar */
.taskbar {
  flex: none;
  display: flex;
  height: 26px;
  color: #fff;
  background: #000;
}

.system,
.apps,
.tray {
  display: flex;
}

.system button {
  width: 32px;
}

.apps {
  margin-left: 1px;
}

.apps button {
  width: 33px;
}

.taskbar svg {
  width: 16px;
  height: 16px;
}

.open {
  background: linear-gradient(#76b9ed, #76b9ed) center bottom / 27px 2px no-repeat;
}

.current {
  background: linear-gradient(#76b9ed, #76b9ed) center bottom / 100% 2px no-repeat, #333;
}

.taskbar text {
  font-family: "Open Sans", sans-serif;
  font-size: 8px;
  font-weight: 600;
  text-anchor: middle;
}

.dw { fill: #a3e82c; }
.ps { fill: #42bdf0; }
.count { fill: #fff; }

.tray {
  margin-left: auto;
  padding-right: 9px;
}

.tray button {
  width: 16px;
}

.tray button svg {
  width: 12px;
  height: 12px;
}

.tray .people {
  margin-right: 8px;
}

.clock {
  display: flex;
  flex-direction: column;
  align-items: center;
  justify-content: center;
  gap: 3px;
  width: 54px;
  font-family: Roboto, "Open Sans", sans-serif;
  font-size: 8px;
}

.tray .notes {
  width: 18px;
  margin-left: 6px;
}

.tray .notes svg {
  width: 18px;
  height: 18px;
}
```
